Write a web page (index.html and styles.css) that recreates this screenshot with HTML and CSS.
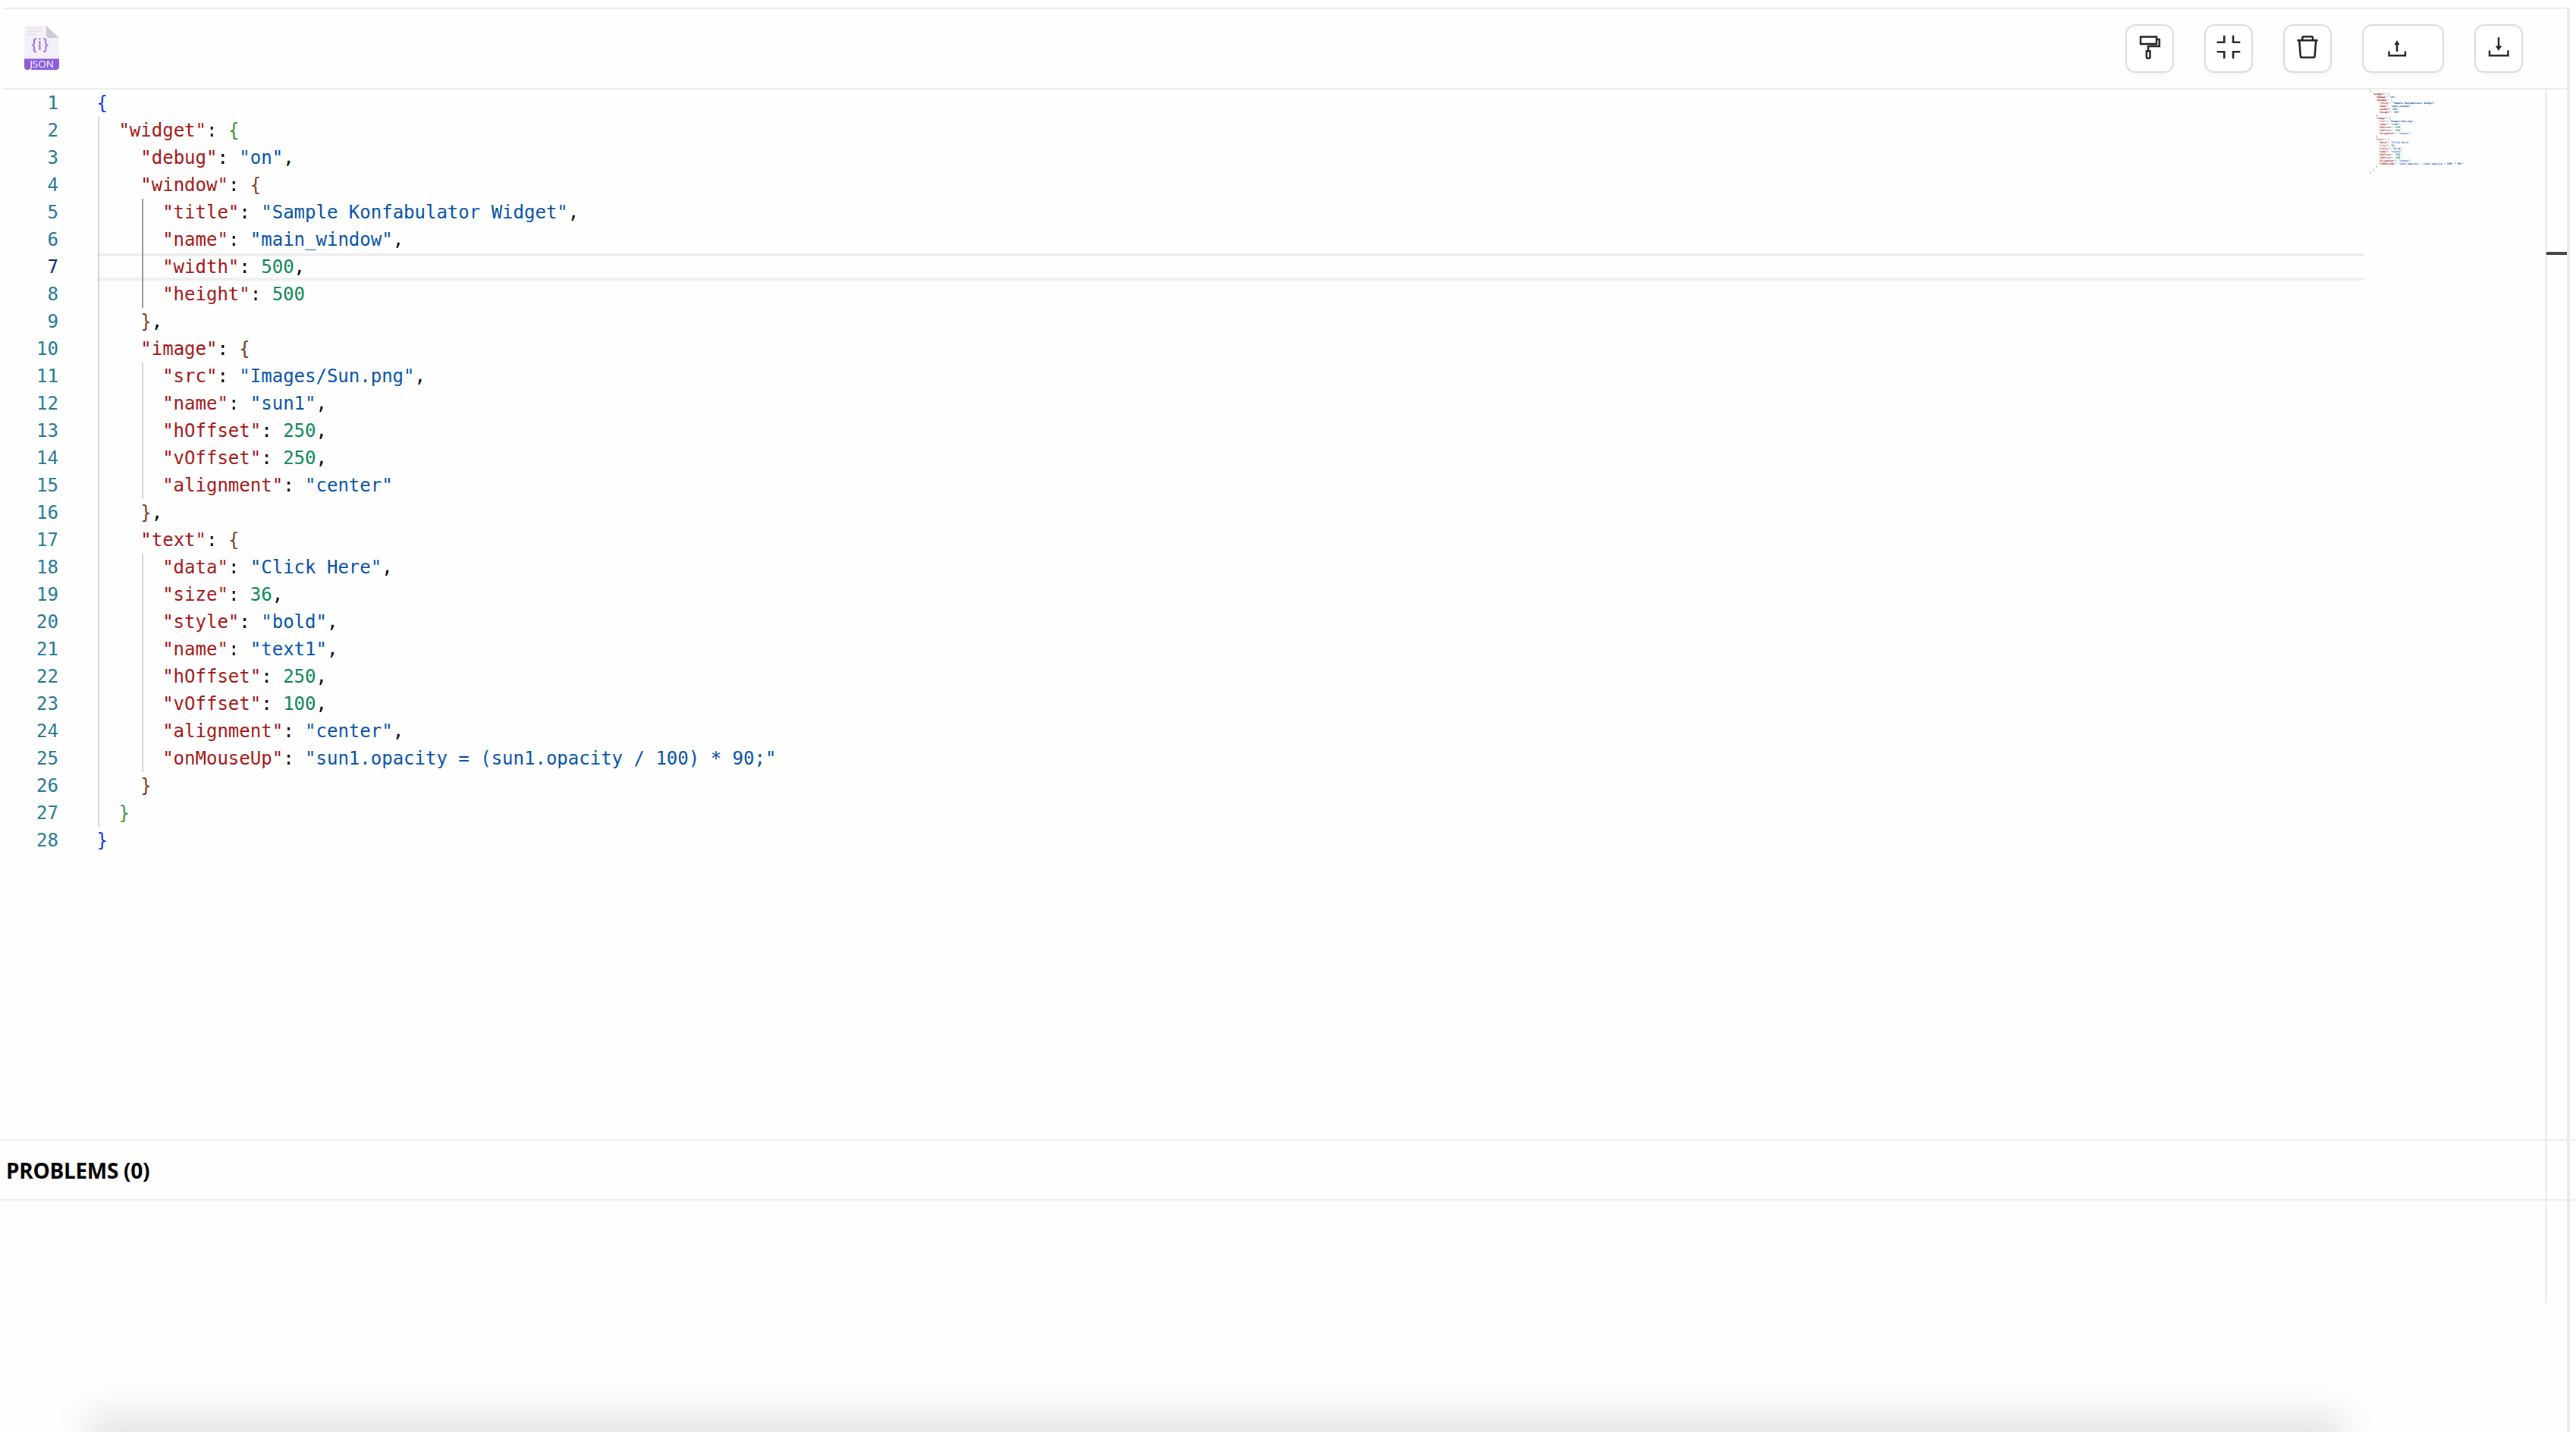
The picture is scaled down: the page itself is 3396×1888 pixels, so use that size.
FILE: index.html
```html
<!DOCTYPE html>
<html lang="en">
<head>
<meta charset="utf-8">
<title>JSON Editor</title>
<link rel="stylesheet" href="styles.css">
</head>
<body>
<div class="page">
<div class="window">
  <header class="toolbar">
    <svg class="logo" viewBox="0 0 46 58" width="46" height="58" aria-label="JSON file">
      <path d="M3 0H29L46 16V54Q46 58 42 58H4Q0 58 0 54V3Q0 0 3 0Z" fill="#f5f0f7"/>
      <path d="M29 0L46 16H33Q29 16 29 12Z" fill="#cfc9d3"/>
      <path d="M4 3H23M4 7H23M4 11H16" stroke="#e4dfe8" stroke-width="1.6" fill="none"/>
      <path d="M0 43.500H46V54Q46 58 42 58H4Q0 58 0 54Z" fill="#8b5cdd"/>
      <text class="logo-braces" x="21" y="32" text-anchor="middle">{i}</text>
      <text class="logo-label" x="23" y="55" text-anchor="middle">JSON</text>
    </svg>
    <div class="actions">
      <button class="btn" type="button" aria-label="Format">
        <svg viewBox="0 0 64 64" width="64" height="64"><path d="M20 16.500H41V26H20ZM41 20H44.800V29H30V35.500"/><path d="M27.800 35.500H32.500V43Q32.500 45 30.200 45Q27.800 45 27.800 43Z"/></svg>
      </button>
      <button class="btn" type="button" aria-label="Compact">
        <svg viewBox="0 0 64 64" width="64" height="64"><path d="M26.300 14.700V23.700H16.700M38 14.700V23.700H47.300M16.700 36.300H26.300V45.300M47.300 36.300H38V45.300"/></svg>
      </button>
      <button class="btn" type="button" aria-label="Clear">
        <svg viewBox="0 0 64 64" width="64" height="64"><path d="M18.300 21.300H45.700M25.300 21.300V18Q25.300 16.300 27 16.300H37.300Q39 16.300 39 18V21.300M21.200 21.300L22.800 42Q23 43.700 24.700 43.700H39.700Q41.400 43.700 41.600 42L43.200 21.300"/></svg>
      </button>
      <button class="btn wide" type="button" aria-label="Upload">
        <svg viewBox="0 0 64 64" width="64" height="64"><path d="M35.500 35.500V41.300H57V35.500M46 36V24"/><path class="fill" d="M46 21L49.500 27H42.500Z"/></svg>
      </button>
      <button class="btn" type="button" aria-label="Download">
        <svg viewBox="0 0 64 64" width="64" height="64"><path d="M20 34.500V41.300H44.500V34.500M32 17.300V30"/><path class="fill" d="M32 35L27.800 28.500H36.200Z"/></svg>
      </button>
    </div>
  </header>

  <section class="editor">
    <div class="lines">
      <div class="line"><span class="num">1</span><code class="code"><span class="b1">{</span></code></div>
      <div class="line"><span class="num">2</span><code class="code"><span class="ind g"></span><span class="k">"widget"</span>: <span class="b2">{</span></code></div>
      <div class="line"><span class="num">3</span><code class="code"><span class="ind g"></span><span class="ind"></span><span class="k">"debug"</span>: <span class="s">"on"</span>,</code></div>
      <div class="line"><span class="num">4</span><code class="code"><span class="ind g"></span><span class="ind"></span><span class="k">"window"</span>: <span class="b3">{</span></code></div>
      <div class="line"><span class="num">5</span><code class="code"><span class="ind g"></span><span class="ind"></span><span class="ind a"></span><span class="k">"title"</span>: <span class="s">"Sample Konfabulator Widget"</span>,</code></div>
      <div class="line"><span class="num">6</span><code class="code"><span class="ind g"></span><span class="ind"></span><span class="ind a"></span><span class="k">"name"</span>: <span class="s">"main_window"</span>,</code></div>
      <div class="line active"><span class="num">7</span><code class="code"><span class="ind g"></span><span class="ind"></span><span class="ind a"></span><span class="k">"width"</span>: <span class="n">500</span>,</code></div>
      <div class="line"><span class="num">8</span><code class="code"><span class="ind g"></span><span class="ind"></span><span class="ind a"></span><span class="k">"height"</span>: <span class="n">500</span></code></div>
      <div class="line"><span class="num">9</span><code class="code"><span class="ind g"></span><span class="ind"></span><span class="b3">}</span>,</code></div>
      <div class="line"><span class="num">10</span><code class="code"><span class="ind g"></span><span class="ind"></span><span class="k">"image"</span>: <span class="b3">{</span></code></div>
      <div class="line"><span class="num">11</span><code class="code"><span class="ind g"></span><span class="ind"></span><span class="ind g"></span><span class="k">"src"</span>: <span class="s">"Images/Sun.png"</span>,</code></div>
      <div class="line"><span class="num">12</span><code class="code"><span class="ind g"></span><span class="ind"></span><span class="ind g"></span><span class="k">"name"</span>: <span class="s">"sun1"</span>,</code></div>
      <div class="line"><span class="num">13</span><code class="code"><span class="ind g"></span><span class="ind"></span><span class="ind g"></span><span class="k">"hOffset"</span>: <span class="n">250</span>,</code></div>
      <div class="line"><span class="num">14</span><code class="code"><span class="ind g"></span><span class="ind"></span><span class="ind g"></span><span class="k">"vOffset"</span>: <span class="n">250</span>,</code></div>
      <div class="line"><span class="num">15</span><code class="code"><span class="ind g"></span><span class="ind"></span><span class="ind g"></span><span class="k">"alignment"</span>: <span class="s">"center"</span></code></div>
      <div class="line"><span class="num">16</span><code class="code"><span class="ind g"></span><span class="ind"></span><span class="b3">}</span>,</code></div>
      <div class="line"><span class="num">17</span><code class="code"><span class="ind g"></span><span class="ind"></span><span class="k">"text"</span>: <span class="b3">{</span></code></div>
      <div class="line"><span class="num">18</span><code class="code"><span class="ind g"></span><span class="ind"></span><span class="ind g"></span><span class="k">"data"</span>: <span class="s">"Click Here"</span>,</code></div>
      <div class="line"><span class="num">19</span><code class="code"><span class="ind g"></span><span class="ind"></span><span class="ind g"></span><span class="k">"size"</span>: <span class="n">36</span>,</code></div>
      <div class="line"><span class="num">20</span><code class="code"><span class="ind g"></span><span class="ind"></span><span class="ind g"></span><span class="k">"style"</span>: <span class="s">"bold"</span>,</code></div>
      <div class="line"><span class="num">21</span><code class="code"><span class="ind g"></span><span class="ind"></span><span class="ind g"></span><span class="k">"name"</span>: <span class="s">"text1"</span>,</code></div>
      <div class="line"><span class="num">22</span><code class="code"><span class="ind g"></span><span class="ind"></span><span class="ind g"></span><span class="k">"hOffset"</span>: <span class="n">250</span>,</code></div>
      <div class="line"><span class="num">23</span><code class="code"><span class="ind g"></span><span class="ind"></span><span class="ind g"></span><span class="k">"vOffset"</span>: <span class="n">100</span>,</code></div>
      <div class="line"><span class="num">24</span><code class="code"><span class="ind g"></span><span class="ind"></span><span class="ind g"></span><span class="k">"alignment"</span>: <span class="s">"center"</span>,</code></div>
      <div class="line"><span class="num">25</span><code class="code"><span class="ind g"></span><span class="ind"></span><span class="ind g"></span><span class="k">"onMouseUp"</span>: <span class="s">"sun1.opacity = (sun1.opacity / 100) * 90;"</span></code></div>
      <div class="line"><span class="num">26</span><code class="code"><span class="ind g"></span><span class="ind"></span><span class="b3">}</span></code></div>
      <div class="line"><span class="num">27</span><code class="code"><span class="ind g"></span><span class="b2">}</span></code></div>
      <div class="line"><span class="num">28</span><code class="code"><span class="b1">}</span></code></div>
    </div>
    <div class="minimap" aria-hidden="true">
      <div class="mini-line"><span class="b0">{</span></div>
      <div class="mini-line">  <span class="k">"widget"</span>: <span class="b0">{</span></div>
      <div class="mini-line">    <span class="k">"debug"</span>: <span class="s">"on"</span>,</div>
      <div class="mini-line">    <span class="k">"window"</span>: <span class="b0">{</span></div>
      <div class="mini-line">      <span class="k">"title"</span>: <span class="s">"Sample Konfabulator Widget"</span>,</div>
      <div class="mini-line">      <span class="k">"name"</span>: <span class="s">"main_window"</span>,</div>
      <div class="mini-line">      <span class="k">"width"</span>: <span class="n">500</span>,</div>
      <div class="mini-line">      <span class="k">"height"</span>: <span class="n">500</span></div>
      <div class="mini-line">    <span class="b0">}</span>,</div>
      <div class="mini-line">    <span class="k">"image"</span>: <span class="b0">{</span></div>
      <div class="mini-line">      <span class="k">"src"</span>: <span class="s">"Images/Sun.png"</span>,</div>
      <div class="mini-line">      <span class="k">"name"</span>: <span class="s">"sun1"</span>,</div>
      <div class="mini-line">      <span class="k">"hOffset"</span>: <span class="n">250</span>,</div>
      <div class="mini-line">      <span class="k">"vOffset"</span>: <span class="n">250</span>,</div>
      <div class="mini-line">      <span class="k">"alignment"</span>: <span class="s">"center"</span></div>
      <div class="mini-line">    <span class="b0">}</span>,</div>
      <div class="mini-line">    <span class="k">"text"</span>: <span class="b0">{</span></div>
      <div class="mini-line">      <span class="k">"data"</span>: <span class="s">"Click Here"</span>,</div>
      <div class="mini-line">      <span class="k">"size"</span>: <span class="n">36</span>,</div>
      <div class="mini-line">      <span class="k">"style"</span>: <span class="s">"bold"</span>,</div>
      <div class="mini-line">      <span class="k">"name"</span>: <span class="s">"text1"</span>,</div>
      <div class="mini-line">      <span class="k">"hOffset"</span>: <span class="n">250</span>,</div>
      <div class="mini-line">      <span class="k">"vOffset"</span>: <span class="n">100</span>,</div>
      <div class="mini-line">      <span class="k">"alignment"</span>: <span class="s">"center"</span>,</div>
      <div class="mini-line">      <span class="k">"onMouseUp"</span>: <span class="s">"sun1.opacity = (sun1.opacity / 100) * 90;"</span></div>
      <div class="mini-line">    <span class="b0">}</span></div>
      <div class="mini-line">  <span class="b0">}</span></div>
      <div class="mini-line"><span class="b0">}</span></div>
    </div>
  </section>

  <section class="problems">
    <h2 class="problems-title">PROBLEMS (0)</h2>
  </section>
  <div class="problems-body"></div>
  <div class="floating-shadow"></div>

  <div class="ruler"><div class="ruler-mark"></div></div>
</div>
</div>
</body>
</html>
```
FILE: styles.css
```css
* { box-sizing: border-box; }
html, body { margin: 0; padding: 0; background: #fefefe; }
.page {
  width: 3396px;
  height: 1888px;
  overflow: hidden;
  padding-top: 10px;
}
.window {
  position: relative;
  width: 3384px;
  height: 1878px;
  margin-left: 4px;
  border-top: 2px solid #ececec;
  border-right: 4px solid #ebebeb;
}
.toolbar {
  display: flex;
  align-items: center;
  justify-content: space-between;
  height: 106px;
  padding: 0 58px 0 28px;
  border-bottom: 2px solid #ececec;
}
.logo { display: block; margin-bottom: 3px; }
.logo-braces {
  font-family: "Open Sans", sans-serif;
  font-size: 21px;
  fill: #8f5fe3;
  letter-spacing: 1px;
}
.logo-label {
  font-family: "Open Sans", sans-serif;
  font-size: 13.500px;
  fill: #ffffff;
}
.actions { display: flex; gap: 40px; }
.btn {
  width: 64px;
  height: 64px;
  padding: 0;
  background: #fff;
  border: 2px solid #dcdcdc;
  border-radius: 13px;
  box-shadow: 0 4px 6px rgba(0, 0, 0, 0.03);
  display: flex;
  align-items: center;
  justify-content: center;
}
.btn.wide { width: 108px; justify-content: flex-start; }
.btn svg { display: block; margin: -2px; flex: none; fill: none; stroke: #222; stroke-width: 2.500; }
.btn svg .fill { fill: #222; stroke: none; }

.editor { display: flex; height: 1384px; }
.lines { flex: 0 0 3112px; }
.line {
  display: flex;
  height: 36px;
  font-family: "DejaVu Sans Mono", monospace;
  font-size: 24px;
  line-height: 36px;
}
.num {
  flex: 0 0 123.500px;
  padding-right: 50.500px;
  text-align: right;
  color: #237893;
}
.code {
  flex: 1;
  font-family: inherit;
  font-size: inherit;
  white-space: pre;
  color: #000;
  font-variant-ligatures: none;
}
.active .num { color: #0b216f; }
.active .code { box-shadow: inset 0 4px #eeeeee, inset 0 -4px #eeeeee; }
.ind {
  display: inline-block;
  width: 2ch;
  height: 36px;
  vertical-align: top;
}
.ind.g { background: linear-gradient(#d3d3d3, #d3d3d3) 1.500px 0 / 2px 100% no-repeat; }
.ind.a { background: linear-gradient(#939393, #939393) 1.500px 0 / 2px 100% no-repeat; }
.k { color: #a31515; }
.s { color: #0451a5; }
.n { color: #098658; }
.b0 { color: #555555; }
.b1 { color: #0431fa; }
.b2 { color: #319331; }
.b3 { color: #7b3814; }

.minimap {
  flex: 1;
  padding-left: 8px;
  font-family: "DejaVu Sans Mono", monospace;
  font-size: 3.320px;
  font-weight: 700;
  line-height: 4px;
  color: #555555;
}
.mini-line { height: 4px; white-space: pre; }
.problems {
  width: 3396px;
  margin-left: -4px;
  height: 81px;
  display: flex;
  align-items: center;
  padding-left: 8px;
  border-top: 2px solid #eeeeee;
  border-bottom: 2px solid #eeeeee;
}
.problems-title {
  margin: 0;
  font-family: "Open Sans", sans-serif;
  font-size: 28px;
  font-weight: 700;
  letter-spacing: -0.3px;
  color: #000;
}
.problems-body { height: 305px; }
.floating-shadow {
  width: 2975px;
  height: 100px;
  margin-left: 111px;
  box-shadow: 0 -25px 50px rgba(0, 0, 0, 0.1);
}
.ruler {
  position: absolute;
  left: 3352px;
  top: 106px;
  width: 28px;
  height: 1600px;
  border-left: 1px solid #d4d4d4;
  padding-top: 214px;
}
.ruler-mark { height: 4px; background: #444444; }
```
